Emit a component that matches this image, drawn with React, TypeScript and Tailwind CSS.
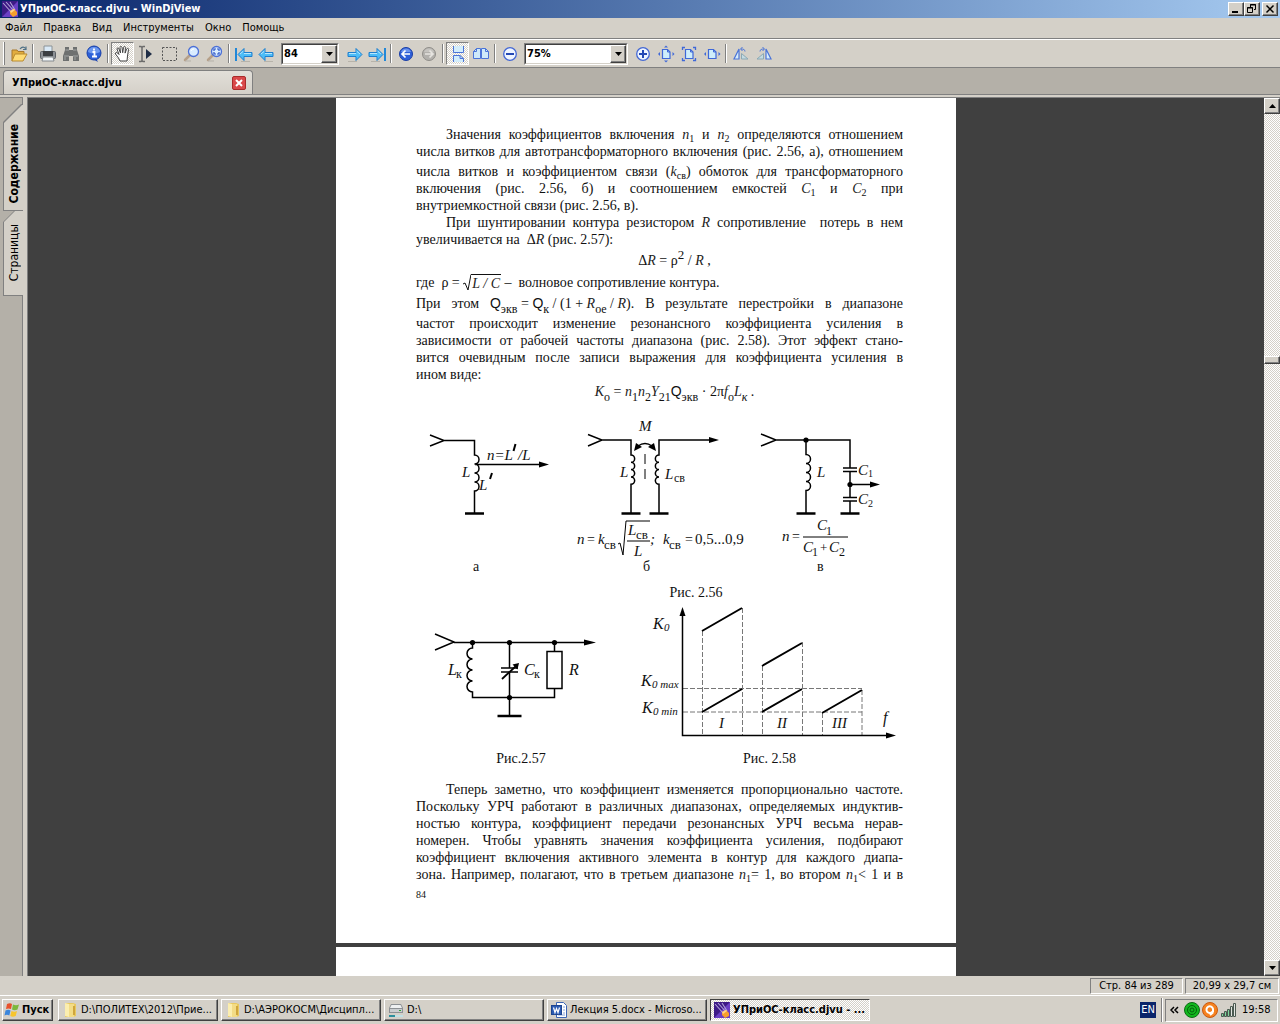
import type { ReactNode } from "react";
import clsx from "clsx";

const raised =
  "border border-t-white border-l-white border-r-[#404040] border-b-[#404040] bg-[#d4d0c8] shadow-[inset_-1px_-1px_0_#808080]";
const sunken = "border border-t-[#808080] border-l-[#808080] border-r-white border-b-white";
const dither = "bg-[repeating-conic-gradient(#fff_0_25%,#d4d0c8_0_50%)] bg-[length:2px_2px]";

const AppIcon = () => (
  <svg viewBox="0 0 16 16" className="w-4 h-4 shrink-0">
    <rect width="16" height="16" fill="#6a3fc4" />
    <path d="M0 0h16L0 16z" fill="#3d1a86" />
    <path d="M1 2l9 10M4 1l8 9M8 1l5 8" stroke="#b3a6d8" strokeWidth="1.1" />
    <path d="M8 10l4-2 3 3v3l-4 2-3-3z" fill="#f6a02c" />
    <path d="M8 10l4-2 1 1-4 3z" fill="#ffd58a" />
  </svg>
);

/* Toolbar icons, 20x20 */
const Svg = ({ children }: { children: ReactNode }) => (
  <svg viewBox="0 0 20 20" className="w-5 h-5" fill="none">
    {children}
  </svg>
);

const OpenIcon = () => (
  <Svg>
    <path d="M3 17V6h5l1 1.500h6V10" fill="#e2ad3e" stroke="#a8782a" />
    <path d="M3 17l3-7h12l-4 7z" fill="#ffdc74" stroke="#b98a2f" />
    <path d="M11 5c2-2.500 4-2.500 5.500-.5M17 2.500V5.500h-3" stroke="#4f7186" strokeWidth="1.200" />
  </Svg>
);

const PrintIcon = () => (
  <Svg>
    <path d="M6 2h8v6H6z" fill="#d9e9f6" stroke="#8b9296" />
    <rect x="2.500" y="7.500" width="15" height="7" rx="1" fill="#8d9196" stroke="#5d6166" />
    <path d="M5 7h10v5H5z" fill="#3c3f43" />
    <path d="M5 13h10l1 4H4z" fill="#f4f8fb" stroke="#858a8e" />
  </Svg>
);

const FindIcon = () => (
  <Svg>
    <path d="M4 3h4v3h4V3h4v3l2 6v5h-6v-5H8v5H2v-5l2-6z" fill="#6e7070" />
    <path d="M3 12h5M12 12h5M4.500 6H8M12 6h3.500" stroke="#a3a5a5" />
    <path d="M4 13v3M14 13v3" stroke="#8f9191" strokeWidth="1.500" />
  </Svg>
);

const InfoIcon = () => (
  <Svg>
    <path d="M7 14h5l2 4z" fill="#1e46b8" />
    <circle cx="10" cy="9" r="7" fill="#2c60d8" stroke="#183fa8" />
    <path d="M4 8a6 5 0 0 1 12 0c-4 2-8 2-12 0z" fill="#6d98ee" />
    <path d="M8.500 8h2v4.500M8 12.500h5M10 4.500v2" stroke="#fff" strokeWidth="1.800" />
  </Svg>
);

const HandIcon = () => (
  <Svg>
    <path
      d="M7 17l-1.500-3-3-4c-.5-1.500 1-2 2-1L6 10.500 4 5c0-1.500 1.500-1.500 2 0l1.500 4L7 3.500C7 2 8.700 2 9 3.500l.7 5.200.8-5.200c.3-1.400 2-1.200 1.900.2l-.3 5.400 1.500-4c.6-1.400 2.200-.8 1.900.5L14.500 12l-.5 5z"
      fill="#fff"
      stroke="#444"
    />
  </Svg>
);

const TextSelectIcon = () => (
  <Svg>
    <path d="M3 2.500h2l1 1 1-1h2M6 3v14M3 17.500h2l1-1 1 1h2" stroke="#6b6b6b" strokeWidth="1.500" />
    <path d="M10 5l6 5-6 5z" fill="#1f2d46" />
  </Svg>
);

const MarqueeIcon = () => (
  <Svg>
    <rect x="3.500" y="3.500" width="14" height="13" stroke="#555" strokeDasharray="2 1.500" />
  </Svg>
);

const MagnifierIcon = ({ area = false }: { area?: boolean }) => (
  <Svg>
    <path d="M8 11l-5 5" stroke="#b6a089" strokeWidth="2.500" strokeLinecap="round" />
    <path d="M3 17h6" stroke="#b5b1a9" />
    <circle cx="11.500" cy="7.500" r="5" fill="#d9ecff" stroke="#4b6fd6" strokeWidth="1.300" />
    {area ? (
      <path d="M9 7V5h2M12 5h2v2M14 8v2h-2M11 10H9V8" stroke="#2850c4" strokeWidth="1.200" />
    ) : (
      <path d="M9 7a3 3 0 0 1 3-2" stroke="#fff" />
    )}
  </Svg>
);

const ArrowIcon = ({ right = false, bar = false }: { right?: boolean; bar?: boolean }) => (
  <svg viewBox="0 0 20 20" className={clsx("w-5 h-5", right && "-scale-x-100")} fill="none">
    <g transform={bar ? "translate(2 0)" : undefined}>
      <path d="M2 10.500L8 4.500v4h8v4H8v4z" fill="#4dbdf7" stroke="#1f7fcf" />
      <path d="M4 10l3.500-3M8 9.500h7" stroke="#b7e7ff" />
    </g>
    {bar && <path d="M2 4v13" stroke="#2288d8" strokeWidth="2" />}
    <path d="M7 17.500h9" stroke="#b7b3aa" />
  </svg>
);

const RoundArrowIcon = ({ forward = false }: { forward?: boolean }) => (
  <svg viewBox="0 0 20 20" className={clsx("w-5 h-5", forward && "-scale-x-100")} fill="none">
    <circle cx="10" cy="10" r="6.500" fill={forward ? "#b3b1ad" : "#2f5fd8"} stroke={forward ? "#8f8d89" : "#1a3ea6"} />
    <path d="M5 8a5.300 5.300 0 0 1 10 0z" fill={forward ? "#c6c4c0" : "#6d94ec"} />
    <path d="M14 10H6.500M9.500 6.500L6 10l3.500 3.500" stroke={forward ? "#e6e4e0" : "#fff"} strokeWidth="1.700" />
  </svg>
);

const ZoomIcon = ({ plus = false }: { plus?: boolean }) => (
  <Svg>
    <circle cx="10" cy="10" r="6.300" fill="#eef5ff" stroke="#4468d4" strokeWidth="1.300" />
    <path d={plus ? "M6 10h8M10 6v8" : "M6 10h8"} stroke="#2348b4" strokeWidth="2" />
  </Svg>
);

const ContinuousIcon = () => (
  <Svg>
    <path d="M5.500 2v6.500h10V2M5.500 18v-6.500H12l3.500 3V18" fill="#d3edfb" stroke="#4b74d8" />
    <path d="M12 11.500v3h3.500" stroke="#4b74d8" />
  </Svg>
);

const FacingIcon = () => (
  <Svg>
    <path d="M2.500 7.500l3-3h4v10h-7zM10.500 4.500h4l3 3v7h-7z" fill="#cfeafa" stroke="#4b74d8" />
    <path d="M5.500 4.500v3h-3M14.500 4.500v3h3" stroke="#4b74d8" />
  </Svg>
);

const FitIcon = ({ kind }: { kind: "page" | "area" | "width" }) => (
  <Svg>
    <path d="M6.500 5.500h5l2.500 2.500v6.500H6.500z" fill="#cfeefb" stroke="#3f68d8" strokeWidth="1.200" />
    <path d="M11.500 5.500V8H14" stroke="#3f68d8" />
    {kind === "page" && <path d="M10 1.500L8 3.500h4zM10 18.500l-2-2h4zM2 10l2-2v4zM18.500 10l-2-2v4z" fill="#3f68d8" />}
    {kind === "width" && <path d="M2 10l2-2v4zM18.500 10l-2-2v4z" fill="#3f68d8" />}
    {kind === "area" && <path d="M3.500 6V3.500H6M14 3.500h2.500V6M16.500 14v2.500H14M6 16.500H3.500V14" stroke="#3f68d8" strokeWidth="1.300" />}
  </Svg>
);

const RotateIcon = ({ right = false }: { right?: boolean }) => (
  <svg viewBox="0 0 20 20" className={clsx("w-5 h-5", right && "-scale-x-100")} fill="none">
    <path d="M8 5v10H3z" fill="#d8eefb" stroke="#4b74d8" strokeWidth="1.200" />
    <path d="M10.500 9.500l6.500 5.500h-6.500z" fill="#c3dbe2" stroke="#8ba8b4" />
    <path d="M14 7.500c0-2-1.500-2.500-4-2.500M11.500 3L9.500 5l2 2" stroke="#4b74d8" />
  </svg>
);

const ToolButton = ({ label, pressed, children }: { label: string; pressed?: boolean; children: ReactNode }) => (
  <button
    type="button"
    aria-label={label}
    className={clsx("w-[23px] h-[23px] shrink-0 flex items-center justify-center", pressed && sunken, pressed && dither)}
  >
    {children}
  </button>
);

const Separator = () => (
  <div className="w-[6px] h-[19px] shrink-0 flex justify-center">
    <span className="w-[2px] border-l border-l-[#808080] border-r border-r-white" />
  </div>
);

const Combo = ({ label, value, className }: { label: string; value: string; className: string }) => (
  <div className={clsx("relative mx-[3px] h-[22px] shrink-0 bg-white", sunken, className)}>
    <select
      aria-label={label}
      className="appearance-none w-full h-full pl-px font-bold text-[11px] leading-[18px] outline-none border border-t-[#404040] border-l-[#404040] border-r-[#d4d0c8] border-b-[#d4d0c8]"
    >
      <option>{value}</option>
    </select>
    <span className={clsx("absolute right-px top-px bottom-px w-4 flex items-center justify-center pointer-events-none", raised)}>
      <svg viewBox="0 0 7 4" className="w-[7px] h-1">
        <path d="M0 0h7L3.500 4z" />
      </svg>
    </span>
  </div>
);

const Toolbar = () => (
  <div className="h-[29px] shrink-0 flex items-center pl-[3px] border-b border-[#808080] border-t border-t-white">
    <span className="w-[2px] h-[23px] mr-[2px] border-l border-l-white border-r border-r-[#808080]" />
    <ToolButton label="Открыть"><OpenIcon /></ToolButton>
    <Separator />
    <ToolButton label="Печать"><PrintIcon /></ToolButton>
    <ToolButton label="Найти"><FindIcon /></ToolButton>
    <ToolButton label="О программе"><InfoIcon /></ToolButton>
    <Separator />
    <ToolButton label="Рука" pressed><HandIcon /></ToolButton>
    <ToolButton label="Выделение текста"><TextSelectIcon /></ToolButton>
    <ToolButton label="Выделение области"><MarqueeIcon /></ToolButton>
    <ToolButton label="Лупа"><MagnifierIcon /></ToolButton>
    <ToolButton label="Увеличить область"><MagnifierIcon area /></ToolButton>
    <Separator />
    <ToolButton label="Первая страница"><ArrowIcon bar /></ToolButton>
    <ToolButton label="Предыдущая страница"><ArrowIcon /></ToolButton>
    <Combo label="Страница" value="84" className="w-[58px]" />
    <ToolButton label="Следующая страница"><ArrowIcon right /></ToolButton>
    <ToolButton label="Последняя страница"><ArrowIcon right bar /></ToolButton>
    <Separator />
    <ToolButton label="Назад"><RoundArrowIcon /></ToolButton>
    <ToolButton label="Вперёд"><RoundArrowIcon forward /></ToolButton>
    <Separator />
    <ToolButton label="Непрерывно" pressed><ContinuousIcon /></ToolButton>
    <ToolButton label="Разворот"><FacingIcon /></ToolButton>
    <Separator />
    <ToolButton label="Уменьшить"><ZoomIcon /></ToolButton>
    <Combo label="Масштаб" value="75%" className="w-[104px]" />
    <ToolButton label="Увеличить"><ZoomIcon plus /></ToolButton>
    <ToolButton label="По странице"><FitIcon kind="page" /></ToolButton>
    <ToolButton label="Растянуть"><FitIcon kind="area" /></ToolButton>
    <ToolButton label="По ширине"><FitIcon kind="width" /></ToolButton>
    <Separator />
    <ToolButton label="Повернуть влево"><RotateIcon /></ToolButton>
    <ToolButton label="Повернуть вправо"><RotateIcon right /></ToolButton>
  </div>
);

const TitleBar = () => (
  <header className="h-[18px] shrink-0 flex items-center gap-[2px] pl-[2px] pr-[2px] bg-gradient-to-r from-[#0a246a] to-[#a6caf0]">
    <AppIcon />
    <h1 className="flex-1 text-white font-bold whitespace-nowrap">УПриОС-класс.djvu - WinDjView</h1>
    <div className="flex">
      <button type="button" aria-label="Свернуть" className={clsx("w-4 h-[14px]", raised)}>
        <svg viewBox="0 0 14 12" className="w-[14px] h-3"><path d="M3 8h6v2H3z" /></svg>
      </button>
      <button type="button" aria-label="Восстановить" className={clsx("w-4 h-[14px]", raised)}>
        <svg viewBox="0 0 14 12" className="w-[14px] h-3" fill="none" stroke="#000">
          <path d="M5.500 4V1.500h5v5H9M5 2h6M2.500 4.500h5v5h-5zM2 5h6" />
        </svg>
      </button>
      <button type="button" aria-label="Закрыть" className={clsx("w-4 h-[14px] ml-[2px]", raised)}>
        <svg viewBox="0 0 14 12" className="w-[14px] h-3" stroke="#000" strokeWidth="1.500">
          <path d="M3.500 2.500l7 7M10.500 2.500l-7 7" />
        </svg>
      </button>
    </div>
  </header>
);

const menu = ["Файл", "Правка", "Вид", "Инструменты", "Окно", "Помощь"];

const MenuBar = () => (
  <nav className="h-[21px] shrink-0 flex items-center gap-[11px] pl-[5px] border-b border-[#808080]">
    {menu.map((item) => (
      <button key={item} type="button">{item}</button>
    ))}
  </nav>
);

const SideTabs = () => (
  <aside className="w-[23px] shrink-0 pl-[3px] pt-[6px] bg-[#b4b0a8] border-t border-r border-[#808080] text-[12px]">
    <button
      type="button"
      className="block w-5 h-[107px] py-px pl-px bg-[#808080] [clip-path:polygon(0_18px,18px_0,100%_0,100%_100%,0_100%)]"
    >
      <span className="flex items-center justify-center w-full h-[105px] pt-3 bg-[#d4d0c8] font-bold [clip-path:polygon(0_18px,18px_0,100%_0,100%_100%,0_100%)]">
        <span className="[writing-mode:vertical-rl] rotate-180">Содержание</span>
      </span>
    </button>
    <button
      type="button"
      className="block w-5 h-[85px] pb-px pl-px bg-[#808080] [clip-path:polygon(0_11px,11px_0,100%_0,100%_100%,0_100%)]"
    >
      <span className="flex items-center justify-center w-full h-full bg-[#d4d0c8] [clip-path:polygon(0_11px,11px_0,100%_0,100%_100%,0_100%)]">
        <span className="[writing-mode:vertical-rl] rotate-180">Страницы</span>
      </span>
    </button>
  </aside>
);

const ScrollBar = () => (
  <div className={clsx("w-4 shrink-0 flex flex-col", dither)}>
    <button type="button" aria-label="Вверх" className={clsx("h-4 flex items-center justify-center", raised)}>
      <svg viewBox="0 0 7 4" className="w-[7px] h-1"><path d="M0 4h7L3.500 0z" /></svg>
    </button>
    <div className="grow-[242]" />
    <div className={clsx("h-2", raised)} />
    <div className="grow-[597]" />
    <button type="button" aria-label="Вниз" className={clsx("h-4 flex items-center justify-center", raised)}>
      <svg viewBox="0 0 7 4" className="w-[7px] h-1"><path d="M0 0h7L3.500 4z" /></svg>
    </button>
  </div>
);

/* One justified line of the scanned text */
const Line = ({ children, indent, last, className }: { children: ReactNode; indent?: boolean; last?: boolean; className?: string }) => (
  <span
    className={clsx("block whitespace-nowrap", indent && "pl-[30px]", !last && "text-justify [text-align-last:justify]", className)}
  >
    {children}
  </span>
);

const Sub = ({ children }: { children: ReactNode }) => <sub className="text-[10px] not-italic">{children}</sub>;
const LowSub = ({ children }: { children: ReactNode }) => <sub className="text-[12px] not-italic -bottom-[5px]">{children}</sub>;
const Q = () => <span className="font-['Liberation_Sans']">Q</span>;
const V = ({ children }: { children: ReactNode }) => <i className="text-[#222]">{children}</i>;

/* Schematic parts */
const Arrow = ({ x, y, w = 10 }: { x: number; y: number; w?: number }) => (
  <polygon points={`${x - w},${y - 3} ${x},${y} ${x - w},${y + 3}`} fill="#000" stroke="none" />
);
const Ground = ({ x, y, w = 19 }: { x: number; y: number; w?: number }) => (
  <path d={`M${x - w / 2} ${y}h${w}`} strokeWidth="2.500" />
);
const Dot = ({ x, y }: { x: number; y: number }) => <circle cx={x} cy={y} r="2.600" fill="#000" stroke="none" />;
const T = ({ x, y, s = 15, up, children }: { x: number; y: number; s?: number; up?: boolean; children: ReactNode }) => (
  <text x={x} y={y} fontSize={s} fontStyle={up ? "normal" : "italic"} fill="#111" stroke="none">
    {children}
  </text>
);

const CouplingFigure = () => (
  <svg viewBox="416 402 487 180" className="block w-full" fill="none" stroke="#000" strokeWidth="1.500">
    {/* autotransformer */}
    <path d="M430 435l14 5.500-14 5.500M444 440.500h30.500v14.500a4.500 4.500 0 0 1 0 9a4.500 4.500 0 0 1 0 9a4.500 4.500 0 0 1 0 9a4.500 4.500 0 0 1 0 9v22.500M475 464.500h66" />
    <Arrow x={549} y={464.5} />
    <Ground x={474.5} y={513.5} />
    <T x={487} y={460}>n=L</T>
    <path d="M515.500 444l-2 7" strokeWidth="2" />
    <T x={518} y={460}>/L</T>
    <T x={462} y={477}>L</T>
    <T x={479} y={490}>L</T>
    <path d="M492 473l-2 6" strokeWidth="2" />

    {/* transformer */}
    <path d="M588 434.500l14 5.500-14 6M602 440h29v15a3.600 3.600 0 0 1 0 7.300a3.600 3.600 0 0 1 0 7.300a3.600 3.600 0 0 1 0 7.300a3.600 3.600 0 0 1 0 7.300v29.500" />
    <path d="M712 440h-53v15a3.600 3.600 0 0 0 0 7.300a3.600 3.600 0 0 0 0 7.300a3.600 3.600 0 0 0 0 7.300a3.600 3.600 0 0 0 0 7.300v29.500" />
    <Arrow x={719} y={440} />
    <Ground x={631} y={513.5} />
    <Ground x={659} y={513.5} />
    <path d="M638 446q7-5 14 0" />
    <path d="M634 451l2-8 6 4zM656 451l-2-8-6 4z" fill="#000" stroke="none" />
    <path d="M645 454v10M645 469v10" strokeWidth="1" />
    <T x={639} y={431}>M</T>
    <T x={620} y={477}>L</T>
    <T x={665} y={479}>L</T>
    <T x={674} y={482} s={12} up>св</T>
    <T x={577} y={544}>n</T>
    <T x={587} y={544} s={14} up>=</T>
    <T x={598} y={544}>k</T>
    <T x={604} y={549} s={13} up>св</T>
    <path d="M618 544l2-1 3 12 3-34h24M627 541h23" strokeWidth="1" />
    <T x={628} y={535}>L</T>
    <T x={636} y={539} s={13} up>св</T>
    <T x={634} y={556}>L</T>
    <T x={650} y={544}>;</T>
    <T x={663} y={544}>k</T>
    <T x={669} y={549} s={13} up>св</T>
    <T x={685} y={544} s={14} up>=</T>
    <T x={695} y={544} up>0,5...0,9</T>

    {/* capacitive divider */}
    <path d="M761 434l15 6-15 6M776 440h74v28M806 440v14.500a4.500 4.500 0 0 1 0 9a4.500 4.500 0 0 1 0 9a4.500 4.500 0 0 1 0 9a4.500 4.500 0 0 1 0 9v23" />
    <path d="M843 468h14M843 471.500h14M850 472v25M843 497.500h14M843 501h14M850 501v13M850 484.500h22" />
    <Arrow x={880} y={484.5} />
    <Dot x={806} y={440} />
    <Dot x={850} y={484.5} />
    <Ground x={806} y={513.5} />
    <Ground x={850} y={513.5} />
    <T x={817} y={477}>L</T>
    <T x={858} y={475}>C</T>
    <T x={868} y={477} s={10} up>1</T>
    <T x={858} y={504}>C</T>
    <T x={868} y={507} s={10} up>2</T>
    <T x={782} y={541}>n</T>
    <T x={792} y={541} s={14} up>=</T>
    <path d="M803 537h45" strokeWidth="1" />
    <T x={817} y={530}>C</T>
    <T x={826} y={535} s={12} up>1</T>
    <T x={803} y={552}>C</T>
    <T x={812} y={556} s={12} up>1</T>
    <T x={820} y={552} s={13} up>+</T>
    <T x={829} y={552}>C</T>
    <T x={839} y={556} s={12} up>2</T>

    <T x={473} y={571} s={14} up>а</T>
    <T x={643} y={571} s={14} up>б</T>
    <T x={817} y={571} s={14} up>в</T>
  </svg>
);

const ContourFigure = () => (
  <svg viewBox="416 602 210 146" className="block w-full" fill="none" stroke="#000" strokeWidth="1.500">
    <path d="M435 634l19 8-19 8M454 642.500h132" />
    <Arrow x={596} y={642.5} w={12} />
    <path d="M472.500 642v6a5.500 5.500 0 0 0 0 11a5.500 5.500 0 0 0 0 11a5.500 5.500 0 0 0 0 11a5.500 5.500 0 0 0 0 11v5.500h82v-9M509.500 642v26M501 668h17M501 672h17M509.500 672v44M554.500 642v9" />
    <path d="M502 679l14-13" strokeWidth="1.800" />
    <path d="M518 664l-1 4-3-3z" fill="#000" />
    <rect x="547" y="651.500" width="15" height="37" />
    <Dot x={472.5} y={642.5} />
    <Dot x={509.5} y={642.5} />
    <Dot x={554.5} y={642.5} />
    <Dot x={509.5} y={697.5} />
    <Ground x={509.5} y={716} w={24} />
    <T x={448} y={675} s={16}>L</T>
    <T x={456} y={678} s={12} up>к</T>
    <T x={524} y={675} s={16}>C</T>
    <T x={534} y={678} s={12} up>к</T>
    <T x={569} y={675} s={16}>R</T>
  </svg>
);

const GainFigure = () => (
  <svg viewBox="636 602 267 146" className="block w-full" fill="none" stroke="#000" strokeWidth="1.500">
    <path
      d="M683 688.500h179M683 712h179M702.500 631v104M742.500 608v127M762.500 666v69M802.500 642v93M822.500 713v22M862 690v45"
      stroke="#777"
      strokeWidth="1"
      strokeDasharray="5 2"
    />
    <path d="M682.500 612v123.500H889" />
    <polygon points="679.5,616 682.5,607 685.5,616" fill="#000" stroke="none" />
    <Arrow x={896} y={735.5} />
    <path d="M702 631l40-23M762 666l40-23M702 712l40-23M762 712l40-23M822 713l40-23" strokeWidth="2" />
    <T x={653} y={629} s={16}>K</T>
    <T x={664} y={631} s={11}>0</T>
    <T x={641} y={686} s={16}>K</T>
    <T x={652} y={688} s={11}>0 max</T>
    <T x={642} y={713} s={16}>K</T>
    <T x={653} y={715} s={11}>0 min</T>
    <T x={719} y={728}>I</T>
    <T x={777} y={728}>II</T>
    <T x={832} y={728}>III</T>
    <T x={883} y={723} s={16}>f</T>
  </svg>
);

const DocumentPage = () => (
  <article className="w-[620px] max-w-full min-h-[845px] shrink-0 bg-white pt-7 pl-20 pr-[53px] text-[14px] leading-[17px] font-['Liberation_Serif',serif] text-[#111]">
    <p>
      <Line indent>Значения коэффициентов включения <V>n</V><Sub>1</Sub> и <V>n</V><Sub>2</Sub> определяются отношением</Line>
      <Line>числа витков для автотрансформаторного включения (рис. 2.56, а), отношением</Line>
      <Line className="pt-[3px]">числа витков и коэффициентом связи (<V>k</V><Sub>св</Sub>) обмоток для трансформаторного</Line>
      <Line>включения (рис. 2.56, б) и соотношением емкостей <V>C</V><Sub>1</Sub> и <V>C</V><Sub>2</Sub> при</Line>
      <Line last>внутриемкостной связи (рис. 2.56, в).</Line>
    </p>
    <p>
      <Line indent>При шунтировании контура резистором <V>R</V> сопротивление&nbsp; потерь в нем</Line>
      <Line last>увеличивается на &nbsp;Δ<V>R</V> (рис. 2.57):</Line>
    </p>
    <p className="h-[26px] pl-[30px] text-center leading-[26px]">
      Δ<V>R</V> = ρ<sup className="text-[13px]">2</sup> / <V>R</V> ,
    </p>
    <p className="flex items-center">
      <span>где&nbsp; ρ =&nbsp;</span>
      <svg viewBox="0 0 8 17" className="w-2 h-[17px]" fill="none" stroke="#111">
        <path d="M0 10l2-1 3 7 3-15.500" />
      </svg>
      <span className="h-[17px] px-px border-t border-[#111]"><V>L / C</V></span>
      <span>&nbsp;–&nbsp; волновое сопротивление контура.</span>
    </p>
    <p>
      <Line className="h-6 leading-6">
        При этом{" "}
        <span className="inline-block [text-align-last:left]">
          <Q /><LowSub>экв</LowSub> = <Q /><LowSub>к</LowSub> / (1 + <V>R</V><LowSub>ое</LowSub> / <V>R</V>).
        </span>{" "}
        В результате перестройки в диапазоне
      </Line>
      <Line>частот происходит изменение резонансного коэффициента усиления в</Line>
      <Line>зависимости от рабочей частоты диапазона (рис. 2.58). Этот эффект стано-</Line>
      <Line>вится очевидным после записи выражения для коэффициента усиления в</Line>
      <Line last>ином виде:</Line>
    </p>
    <p className="h-[19px] pl-[30px] text-center">
      <V>K</V><LowSub>о</LowSub> = <V>n</V><LowSub>1</LowSub><V>n</V><LowSub>2</LowSub><V>Y</V><LowSub>21</LowSub><Q /><LowSub>экв</LowSub> · 2π<V>f</V><LowSub>о</LowSub><V>L</V><LowSub><i>к</i></LowSub> .
    </p>
    <figure>
      <CouplingFigure />
      <figcaption className="pt-[2px] pl-[73px] text-center">Рис. 2.56</figcaption>
    </figure>
    <div className="grid grid-cols-[210fr_267fr] gap-[10px] pt-px">
      <figure>
        <ContourFigure />
        <figcaption className="pt-[2px] text-center">Рис.2.57</figcaption>
      </figure>
      <figure>
        <GainFigure />
        <figcaption className="pt-[2px] text-center">Рис. 2.58</figcaption>
      </figure>
    </div>
    <p className="pt-[14px]">
      <Line indent>Теперь заметно, что коэффициент изменяется пропорционально частоте.</Line>
      <Line>Поскольку УРЧ работают в различных диапазонах, определяемых индуктив-</Line>
      <Line>ностью контура, коэффициент передачи резонансных УРЧ весьма нерав-</Line>
      <Line>номерен. Чтобы уравнять значения коэффициента усиления, подбирают</Line>
      <Line>коэффициент включения активного элемента в контур для каждого диапа-</Line>
      <Line>зона. Например, полагают, что в третьем диапазоне <V>n</V><Sub>1</Sub>= 1, во втором <V>n</V><Sub>1</Sub>&lt; 1 и в</Line>
    </p>
    <p className="pt-[3px] text-[10px]">84</p>
  </article>
);

const StatusBar = () => (
  <footer className="h-[19px] shrink-0 flex items-center justify-end gap-[2px] pr-px">
    <span className={clsx("w-[93px] h-4 flex items-center justify-center", sunken)}>Стр. 84 из 289</span>
    <span className={clsx("w-[94px] h-4 flex items-center justify-center", sunken)}>20,99 x 29,7 см</span>
  </footer>
);

const FolderIcon = () => (
  <svg viewBox="0 0 16 16" className="w-4 h-4 shrink-0">
    <path d="M3 1h8l3 1v12l-3 1H3z" fill="#e9c95e" />
    <path d="M3 1l4 1v13l-4-1z" fill="#fbeeb0" />
    <path d="M7 2h5v13H7z" fill="#f3dc86" />
    <path d="M11 4h2v9h-2z" fill="#cfa63d" />
  </svg>
);

const DriveIcon = () => (
  <svg viewBox="0 0 16 16" className="w-4 h-4 shrink-0">
    <path d="M3 2h10l2 4v5H1V6z" fill="#8c9094" />
    <path d="M3.500 3h9l1.500 3H2z" fill="#eef0f1" />
    <path d="M2 7h12v3H2z" fill="#c9cdd0" />
    <path d="M11 8h2v1h-2z" fill="#2ca52c" />
    <path d="M1 13h14v2H1z" fill="#bfe0e4" />
    <path d="M1 13h6v2H1z" fill="#2c8f9c" />
  </svg>
);

const WordIcon = () => (
  <svg viewBox="0 0 16 16" className="w-4 h-4 shrink-0" fill="none">
    <path d="M5.500 .5h7l3 3v12h-10z" fill="#fff" stroke="#3d66b4" />
    <path d="M12 5h2M12 8h2M12 11h2M7 13h7" stroke="#8aa6d8" />
    <rect x=".5" y="3.500" width="10" height="9" fill="#2c5cb4" stroke="#1d448f" />
    <path d="M2.500 5.500l1.500 5 1.500-4 1.500 4 1.500-5" stroke="#fff" strokeWidth="1.200" />
  </svg>
);

const WindowsFlag = () => (
  <svg viewBox="0 0 16 16" className="w-4 h-4 shrink-0">
    <path d="M3 2q3-1.500 5 0L7 7Q4.500 6 2 7z" fill="#e8502a" />
    <path d="M9 2.500q3 1.500 6 0l-1.500 5q-3 1.500-5.500 0z" fill="#7cb83c" />
    <path d="M1.500 8.500q3-1.500 5 0l-1.200 5Q3 12 .5 13.500z" fill="#3a86dc" />
    <path d="M7.500 9q3 1.500 5.500 0l-1.300 5q-3 1.500-5.400 0z" fill="#f7c52c" />
  </svg>
);

const tasks = [
  { title: "D:\\ПОЛИТЕХ\\2012\\Прие...", icon: <FolderIcon /> },
  { title: "D:\\АЭРОКОСМ\\Дисципл...", icon: <FolderIcon /> },
  { title: "D:\\", icon: <DriveIcon /> },
  { title: "Лекция 5.docx - Microso...", icon: <WordIcon /> },
  { title: "УПриОС-класс.djvu - ...", icon: <AppIcon />, active: true },
];

const TaskBar = () => (
  <div className="h-[29px] shrink-0 flex items-center pl-[2px] pr-[2px] border-t border-white">
    <button type="button" className={clsx("w-[51px] h-[22px] mr-[5px] shrink-0 flex items-center gap-[2px] pl-px font-bold", raised)}>
      <WindowsFlag />
      Пуск
    </button>
    <div className="flex flex-1 gap-[3px] min-w-0">
      {tasks.map((t) => (
        <button
          key={t.title}
          type="button"
          className={clsx(
            "flex-1 min-w-0 max-w-[160px] h-[22px] flex items-center gap-[3px] pl-[3px] text-left whitespace-nowrap overflow-hidden",
            t.active ? "font-bold border border-t-[#404040] border-l-[#404040] border-r-white border-b-white" : raised,
            t.active && dither
          )}
        >
          {t.icon}
          {t.title}
        </button>
      ))}
    </div>
    <span className="w-4 h-4 mr-[5px] flex items-center justify-center bg-[#0a246a] text-white">EN</span>
    <span className="w-[2px] h-6 mr-[2px] border-l border-l-[#808080] border-r border-r-white" />
    <div className={clsx("w-[113px] h-[23px] flex items-center gap-[2px] pl-1", sunken)}>
      <button type="button" aria-label="Показать значки" className="w-3">
        <svg viewBox="0 0 9 8" className="w-[9px] h-2" fill="none" stroke="#000" strokeWidth="1.500">
          <path d="M4 1L1 4l3 3M8 1L5 4l3 3" />
        </svg>
      </button>
      <svg viewBox="0 0 16 16" className="w-4 h-4" fill="none">
        <circle cx="8" cy="8" r="7.500" fill="#12b91e" stroke="#0a6b12" />
        <circle cx="8" cy="8" r="4.500" stroke="#075f0e" />
        <circle cx="8" cy="8" r="2" stroke="#075f0e" />
      </svg>
      <svg viewBox="0 0 16 16" className="w-4 h-4" fill="none">
        <circle cx="8" cy="8" r="7.500" fill="#f58220" stroke="#c95a10" />
        <path d="M10.500 9.500a3.300 3.300 0 1 1 .5-2.500v3.500M8 13l3-2.500" stroke="#fff" strokeWidth="2" />
      </svg>
      <svg viewBox="0 0 16 16" className="w-4 h-4" fill="#7ed69c" stroke="#4a5a50">
        <path d="M1.500 11.500h2v3h-2zM4.500 9.500h2v5h-2zM7.500 7.500h2v7h-2z" />
        <path d="M10.500 4.500h2v10h-2zM13.500 1.500h2v13h-2z" fill="#e3e6e2" />
      </svg>
      <time className="ml-1">19:58</time>
    </div>
  </div>
);

export default function App() {
  return (
    <div className="h-screen flex flex-col overflow-hidden bg-[#d4d0c8] text-black text-[11px] leading-[14px] font-['DejaVu_Sans_Condensed','DejaVu_Sans',sans-serif]">
      <TitleBar />
      <MenuBar />
      <Toolbar />
      {/* Open documents */}
      <div className="h-[27px] shrink-0 flex items-end pl-[3px] bg-[#b4b0a8] border-b border-[#808080]">
        <div className="w-[250px] h-6 flex items-center justify-between pl-2 pr-[6px] rounded-t border border-b-0 border-[#808080] bg-gradient-to-b from-[#e2dfd9] to-[#d4d0c8]">
          <span className="font-bold">УПриОС-класс.djvu</span>
          <button type="button" aria-label="Закрыть вкладку" className="w-[14px] h-[14px] flex items-center justify-center rounded-[2px] border border-[#a82a2a] bg-[#d9484a]">
            <svg viewBox="0 0 8 8" className="w-2 h-2" stroke="#fff" strokeWidth="2"><path d="M1 1l6 6M7 1L1 7" /></svg>
          </button>
        </div>
      </div>
      <main className="flex flex-1 min-h-0 pt-[2px]">
        <SideTabs />
        <div className="flex flex-1 min-w-0 ml-1 border-t border-l border-[#808080]">
          <div className="flex-1 min-w-0 flex flex-col items-center overflow-hidden bg-[#404040]">
            <DocumentPage />
            <div className="w-[620px] max-w-full flex-1 mt-1 bg-white" />
          </div>
          <ScrollBar />
        </div>
      </main>
      <StatusBar />
      <TaskBar />
    </div>
  );
}
